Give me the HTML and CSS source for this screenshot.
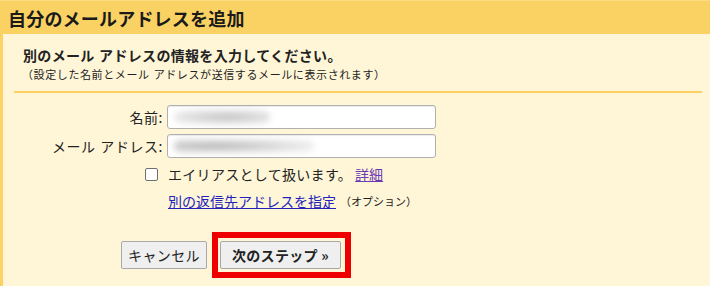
FILE: index.html
```html
<!DOCTYPE html>
<html lang="ja">
<head>
<meta charset="utf-8">
<title>自分のメールアドレスを追加</title>
<link rel="stylesheet" href="styles.css">
</head>
<body>
<div class="header">自分のメールアドレスを追加</div>
<div class="panel">
  <div class="title">別のメール アドレスの情報を入力してください。</div>
  <div class="note">（設定した名前とメール アドレスが送信するメールに表示されます）</div>
  <div class="rule"></div>
  <div class="form">
    <div class="row">
      <label class="label">名前:</label>
      <div class="field"><span class="blur blur-name"></span></div>
    </div>
    <div class="row">
      <label class="label">メール アドレス:</label>
      <div class="field"><span class="blur blur-mail"></span></div>
    </div>
    <div class="check-row">
      <span class="checkbox"></span>
      <span class="check-text">エイリアスとして扱います。</span>
      <a class="link visited" href="#">詳細</a>
    </div>
    <div class="reply-row">
      <a class="link" href="#">別の返信先アドレスを指定</a>
      <span class="small">（オプション）</span>
    </div>
    <div class="buttons">
      <button class="btn cancel">キャンセル</button>
      <div class="highlight">
        <button class="btn next">次のステップ »</button>
      </div>
    </div>
  </div>
</div>
</body>
</html>
```
FILE: styles.css
```css
html, body {
  margin: 0;
  padding: 0;
  background: #fff6d8;
}
body {
  width: 710px;
  height: 286px;
  overflow: hidden;
  font-family: "Noto Sans CJK JP", "Noto Sans", sans-serif;
  color: #222;
}
.header {
  height: 33px;
  border-top: 1px solid #fcdc80;
  background: #fad264;
  padding-left: 8px;
  font-size: 18px;
  font-weight: bold;
  line-height: 35px;
  letter-spacing: 0.2px;
  color: #1a1a1a;
}
.panel {
  border-left: 3px solid #fcd264;
  height: 252px;
  padding-top: 11px;
  box-sizing: border-box;
}
.title {
  font-size: 14px;
  font-weight: bold;
  line-height: 20px;
  padding-left: 20px;
  letter-spacing: 0.32px;
  word-spacing: 1px;
}
.note {
  font-size: 11px;
  line-height: 16px;
  padding-left: 19px;
  margin-top: 1px;
  letter-spacing: 0.6px;
  word-spacing: 1px;
}
.rule {
  height: 2px;
  background: #fcd062;
  margin: 9px 8px 0 11px;
}
.form {
  padding-top: 12px;
}
.row {
  display: flex;
  align-items: center;
  margin-bottom: 5px;
}
.label {
  text-align: right;
  font-size: 14px;
  padding-right: 4px;
  box-sizing: border-box;
  width: 164px;
  letter-spacing: 0.55px;
  word-spacing: 1px;
}
.field {
  width: 269px;
  height: 24px;
  box-sizing: border-box;
  background: #fff;
  border: 1px solid #b0b0b0;
  border-radius: 3px;
  box-shadow: inset 0 1px 1px rgba(0,0,0,0.08);
  display: flex;
  align-items: center;
}
.blur {
  display: block;
  height: 14px;
  margin-left: 6px;
  border-radius: 7px;
  filter: blur(3px);
}
.blur-name {
  width: 96px;
  background: radial-gradient(ellipse at 55% 50%, rgba(0,0,0,0.24), rgba(0,0,0,0.1) 65%, transparent 100%);
}
.blur-mail {
  width: 140px;
  background: radial-gradient(ellipse at 28% 50%, rgba(0,0,0,0.3), rgba(0,0,0,0.1) 60%, transparent 100%);
}
.check-row {
  display: flex;
  align-items: center;
  height: 20px;
  margin-top: 6px;
  padding-left: 142px;
  font-size: 14px;
}
.checkbox {
  width: 11px;
  height: 11px;
  border: 1px solid #6f6f6f;
  border-radius: 2px;
  background: #fff;
  margin-right: 10px;
}
.check-text {
  letter-spacing: 0.3px;
  margin-right: 3px;
}
.link {
  color: #2222bb;
  text-decoration: underline;
}
.visited {
  color: #6b3ab3;
}
.reply-row {
  display: flex;
  align-items: center;
  height: 20px;
  margin-top: 7px;
  padding-left: 165px;
  font-size: 14px;
}
.small {
  font-size: 11px;
  margin-left: 4px;
}
.buttons {
  display: flex;
  align-items: center;
  margin-top: 21px;
  padding-left: 118px;
}
.btn {
  height: 28px;
  box-sizing: border-box;
  background: #efefef;
  border: 1px solid #a8a8a8;
  border-radius: 2px;
  font-family: "Noto Sans CJK JP", "Noto Sans", sans-serif;
  font-size: 14px;
  color: #222;
  padding: 0;
  line-height: 26px;
}
.cancel {
  width: 86px;
  letter-spacing: 0.4px;
}
.next {
  width: 121px;
  font-weight: bold;
  letter-spacing: 0.3px;
}
.highlight {
  border: 6px solid #ee0000;
  padding: 3px 4px 3px 2px;
  margin-left: 5px;
  display: flex;
}
```
